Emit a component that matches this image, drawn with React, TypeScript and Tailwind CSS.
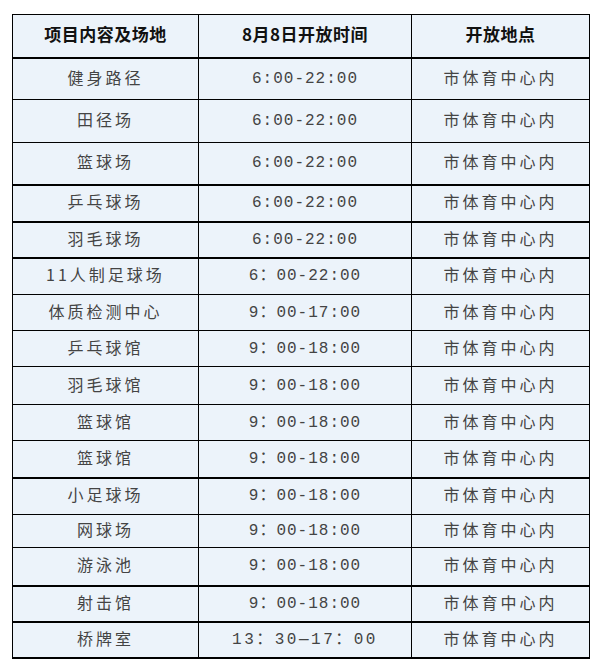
const rows: { name: string; time: string; h: number; thick?: boolean; wide?: boolean }[] = [
  { name: "健身路径", time: "6:00-22:00", h: 42 },
  { name: "田径场", time: "6:00-22:00", h: 43 },
  { name: "篮球场", time: "6:00-22:00", h: 42, thick: true },
  { name: "乒乓球场", time: "6:00-22:00", h: 37, thick: true },
  { name: "羽毛球场", time: "6:00-22:00", h: 36, thick: true },
  { name: "11人制足球场", time: "6：00-22:00", h: 37 },
  { name: "体质检测中心", time: "9：00-17:00", h: 36 },
  { name: "乒乓球馆", time: "9：00-18:00", h: 36 },
  { name: "羽毛球馆", time: "9：00-18:00", h: 38 },
  { name: "篮球馆", time: "9：00-18:00", h: 36 },
  { name: "篮球馆", time: "9：00-18:00", h: 37, thick: true },
  { name: "小足球场", time: "9：00-18:00", h: 37 },
  { name: "网球场", time: "9：00-18:00", h: 33 },
  { name: "游泳池", time: "9：00-18:00", h: 38, thick: true },
  { name: "射击馆", time: "9：00-18:00", h: 36, thick: true },
  { name: "桥牌室", time: "13：30—17：00", h: 36, thick: true, wide: true },
];

export default function App() {
  return (
    <div className="min-h-[672px] bg-white pl-3 pt-[14px] font-['Noto_Sans_CJK_SC',sans-serif]">
      <table className="w-[577px] table-fixed border-collapse bg-[#ecf3fa]">
        <colgroup>
          <col className="w-[186px]" />
          <col className="w-[213px]" />
          <col className="w-[178px]" />
        </colgroup>
        <thead>
          <tr>
            {["项目内容及场地", "8月8日开放时间", "开放地点"].map((t) => (
              <th
                key={t}
                className="h-[43px] border border-b-2 border-black p-0 pb-[4px] text-center text-[17px] font-bold tracking-[0.5px] text-[#111]"
              >
                {t}
              </th>
            ))}
          </tr>
        </thead>
        <tbody>
          {rows.map((r, i) => {
            const cell = r.thick
              ? "border border-b-2 border-black p-0 text-center"
              : "border border-black p-0 text-center";
            return (
              <tr key={i} style={{ height: r.h }}>
                <td className={`${cell} pb-[4px] text-[16px] tracking-[3px] text-[#444]`}>{r.name}</td>
                <td
                  className={`${cell} font-['Liberation_Mono','Noto_Sans_CJK_SC',monospace] text-[16px] text-[#444] ${
                    r.wide ? "tracking-[2.5px]" : "tracking-[1px]"
                  }`}
                >
                  {r.time}
                </td>
                <td className={`${cell} pb-[4px] text-[16px] tracking-[3px] text-[#444]`}>市体育中心内</td>
              </tr>
            );
          })}
        </tbody>
      </table>
    </div>
  );
}
